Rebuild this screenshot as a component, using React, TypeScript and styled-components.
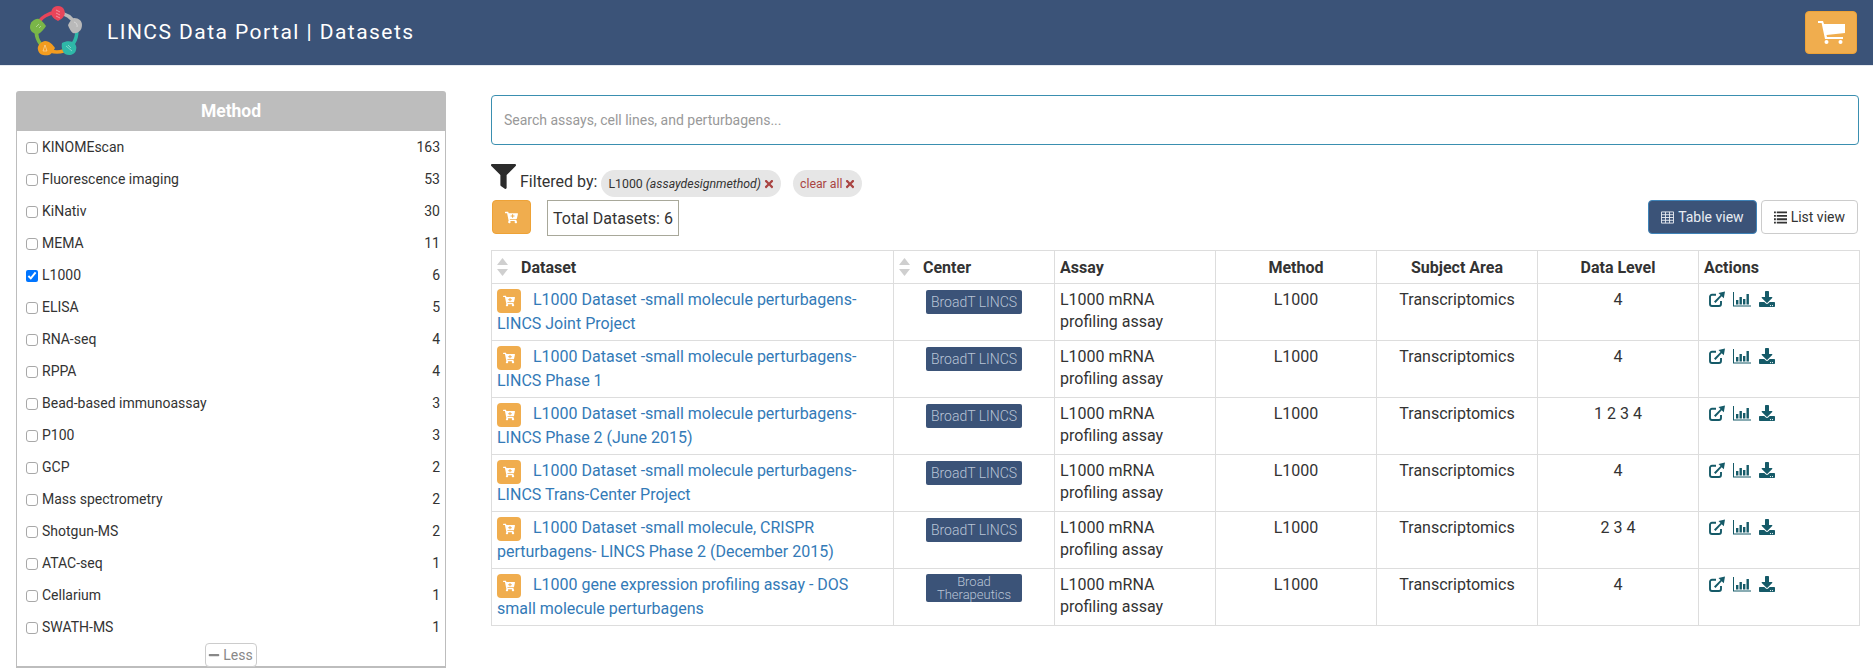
import { createGlobalStyle } from "styled-components";
import styled from "styled-components";
import { FaCartPlus, FaDownload, FaFilter, FaMinus, FaTimes } from "react-icons/fa";

const GlobalStyle = createGlobalStyle`
  html, body {
    margin: 0;
    padding: 0;
    background: #fff;
  }
  body {
    font-family: Roboto, "Liberation Sans", sans-serif;
    color: #333;
    font-size: 14px;
  }
  * {
    box-sizing: border-box;
  }
`;

const TopBar = styled.header`
  display: flex;
  align-items: center;
  height: 66px;
  padding: 0 16px 1px 30px;
  background: #3b5378;
  border-bottom: 1px solid #e6e9ef;
`;

const Logo = styled.svg`
  width: 54px;
  height: 54px;
  flex: none;
`;

const Title = styled.h1`
  margin: 0 0 0 23px;
  flex: 1;
  color: #fff;
  font-size: 21px;
  font-weight: 400;
  letter-spacing: 1.45px;
`;

const CartButton = styled.button`
  display: flex;
  align-items: center;
  justify-content: center;
  width: 52px;
  height: 43px;
  padding: 0;
  border: 1px solid #eea236;
  border-radius: 4px;
  background: #f0ad4e;
  color: #fff;
`;

const CartGlyph = styled.svg`
  width: 27px;
  height: 23px;
  fill: #fff;
`;

const Page = styled.div`
  display: flex;
  align-items: flex-start;
  padding: 25px 14px 0 16px;
`;

const FacetPanel = styled.aside`
  flex: none;
  width: 430px;
  height: 577px;
  margin-right: 45px;
  border: 1px solid #bdbdbd;
  border-bottom-width: 2px;
  border-radius: 3px 3px 0 0;
`;

const FacetTitle = styled.div`
  height: 39px;
  line-height: 39px;
  background: #bdbdbd;
  color: #fff;
  font-size: 17.5px;
  font-weight: 700;
  text-align: center;
`;

const FacetList = styled.ul`
  margin: 0;
  padding: 0;
  list-style: none;
`;

const FacetRow = styled.li`
  display: flex;
  align-items: center;
  height: 32px;
  padding: 0 5px 0 9px;
  font-size: 14px;
`;

const FacetCheck = styled.input`
  width: 12px;
  height: 12px;
  margin: 1px 4px 0 0;
  &:not(:checked) {
    appearance: none;
    border: 1px solid #a8a8a8;
    border-radius: 3px;
    background: #fff;
  }
`;

const FacetName = styled.span`
  flex: 1;
`;

const LessRow = styled.div`
  display: flex;
  justify-content: center;
`;

const LessButton = styled.button`
  display: flex;
  align-items: center;
  gap: 3px;
  height: 24px;
  padding: 0 3px 0 2px;
  border: 1px solid #ccc;
  border-radius: 4px;
  background: #fff;
  color: #888;
  font: 400 14px Roboto, sans-serif;
`;

const Main = styled.main`
  flex: 1;
  min-width: 0;
  padding-top: 4px;
`;

const SearchBox = styled.input`
  display: block;
  width: 100%;
  height: 50px;
  padding: 0 12px;
  border: 1px solid #3a8fb0;
  border-radius: 4px;
  font: 400 14px Roboto, sans-serif;
  outline: none;
  &::placeholder {
    color: #999;
    opacity: 1;
  }
`;

const FilterRow = styled.div`
  display: flex;
  align-items: flex-end;
  height: 55px;
  padding-top: 19px;
`;

const FunnelIcon = styled(FaFilter)`
  width: 25px;
  height: 25px;
  margin-right: 4px;
  margin-bottom: 11px;
  color: #2b2b2b;
`;

const FilterLabel = styled.span`
  margin-right: 4px;
  margin-bottom: 9px;
  font-size: 16px;
`;

const Chip = styled.span<{ $danger?: boolean }>`
  display: inline-flex;
  align-items: center;
  gap: 2px;
  height: 27px;
  margin-right: 12px;
  margin-bottom: 3px;
  padding: 0 6px 0 7px;
  border-radius: 14px;
  background: #e6e6e6;
  color: ${(p) => (p.$danger ? "#a94442" : "#333")};
  font-size: 12.3px;
  svg {
    color: #a94442;
    font-size: 12px;
  }
`;

const ToolRow = styled.div`
  display: flex;
  align-items: flex-start;
  height: 50px;
`;

const AddAllButton = styled.button`
  display: flex;
  align-items: center;
  justify-content: center;
  width: 39px;
  height: 34px;
  margin-left: 1px;
  padding: 0;
  border: 1px solid #eea236;
  border-radius: 4px;
  background: #f0ad4e;
  color: #fff;
  font-size: 13px;
`;

const TotalBox = styled.div`
  height: 36px;
  margin-left: 16px;
  padding: 0 5px;
  border: 1px solid #a8a89a;
  font-size: 16px;
  line-height: 36px;
`;

const ViewSwitch = styled.div`
  display: flex;
  gap: 4px;
  margin-left: auto;
  margin-right: 1px;
`;

const ViewButton = styled.button<{ $active?: boolean }>`
  display: flex;
  align-items: center;
  gap: 4px;
  height: 34px;
  padding: 0 12px;
  border: 1px solid ${(p) => (p.$active ? "#3f83b8" : "#ccc")};
  border-radius: 4px;
  background: ${(p) => (p.$active ? "#3b5378" : "#fff")};
  color: ${(p) => (p.$active ? "#e8ecf2" : "#333")};
  font: 400 14px Roboto, sans-serif;
`;

const ViewGlyph = styled.svg`
  width: 13px;
  height: 13px;
  flex: none;
`;

const DataTable = styled.table`
  width: 1368px;
  border-collapse: collapse;
  table-layout: fixed;
  font-size: 16px;
`;

const HeadCell = styled.th<{ $left?: boolean }>`
  height: 33px;
  padding: 0 5px;
  border: 1px solid #ddd;
  font-size: 16px;
  font-weight: 700;
  text-align: ${(p) => (p.$left ? "left" : "center")};
`;

const HeadInner = styled.div`
  display: flex;
  align-items: center;
  gap: 13px;
`;

const SortArrows = styled.svg`
  width: 11px;
  height: 18px;
  fill: #cfcfcf;
  flex: none;
`;

const Cell = styled.td<{ $center?: boolean }>`
  height: 57px;
  padding: 5px;
  border: 1px solid #ddd;
  line-height: 22px;
  vertical-align: top;
  text-align: ${(p) => (p.$center ? "center" : "left")};
`;

const LinkCell = styled(Cell)`
  padding: 4px 5px;
`;

const DatasetLink = styled.a`
  color: #337ab7;
  font-size: 16px;
  line-height: 24px;
  text-decoration: none;
`;

const RowCart = styled.span`
  display: inline-flex;
  align-items: center;
  justify-content: center;
  width: 24px;
  height: 24px;
  margin: 1px 12px -1px 0;
  border-radius: 4px;
  background: #f0ad4e;
  color: #fff;
  font-size: 12px;
  vertical-align: top;
`;

const CenterBadge = styled.span<{ $tall?: boolean }>`
  display: flex;
  align-items: center;
  justify-content: center;
  width: 96px;
  height: ${(p) => (p.$tall ? "28px" : "24px")};
  margin: ${(p) => (p.$tall ? "0" : "1px")} auto 0;
  border-radius: 2px;
  background: #3b5378;
  color: #b9c4d6;
  font-size: ${(p) => (p.$tall ? "13px" : "14px")};
  font-weight: 300;
  line-height: 13px;
  text-align: center;
`;

const Actions = styled.div`
  display: flex;
  align-items: center;
  gap: 8px;
  padding: 2px 0 0 5px;
  color: #155a68;
  font-size: 16px;
`;

const ActionGlyph = styled.svg<{ $wide?: boolean }>`
  width: ${(p) => (p.$wide ? "18px" : "16px")};
  height: 16px;
  flex: none;
`;

type Dataset = {
  first: string;
  second: string;
  center: string;
  level: string;
};

const datasets: Dataset[] = [
  { first: "L1000 Dataset -small molecule perturbagens-", second: "LINCS Joint Project", center: "BroadT LINCS", level: "4" },
  { first: "L1000 Dataset -small molecule perturbagens-", second: "LINCS Phase 1", center: "BroadT LINCS", level: "4" },
  { first: "L1000 Dataset -small molecule perturbagens-", second: "LINCS Phase 2 (June 2015)", center: "BroadT LINCS", level: "1 2 3 4" },
  { first: "L1000 Dataset -small molecule perturbagens-", second: "LINCS Trans-Center Project", center: "BroadT LINCS", level: "4" },
  { first: "L1000 Dataset -small molecule, CRISPR", second: "perturbagens- LINCS Phase 2 (December 2015)", center: "BroadT LINCS", level: "2 3 4" },
  { first: "L1000 gene expression profiling assay - DOS", second: "small molecule perturbagens", center: "Broad Therapeutics", level: "4" },
];

const facets: [string, number, boolean?][] = [
  ["KINOMEscan", 163],
  ["Fluorescence imaging", 53],
  ["KiNativ", 30],
  ["MEMA", 11],
  ["L1000", 6, true],
  ["ELISA", 5],
  ["RNA-seq", 4],
  ["RPPA", 4],
  ["Bead-based immunoassay", 3],
  ["P100", 3],
  ["GCP", 2],
  ["Mass spectrometry", 2],
  ["Shotgun-MS", 2],
  ["ATAC-seq", 1],
  ["Cellarium", 1],
  ["SWATH-MS", 1],
];

function LincsLogo() {
  return (
    <Logo viewBox="0 0 54 54">
      <g fill="none" strokeWidth="3.5">
        <path d="M28 8 A20 20 0 0 1 45 19" stroke="#b9b9b9" />
        <path d="M45 19 A20 20 0 0 1 39 43" stroke="#2fb8a8" />
        <path d="M39 43 A20 20 0 0 1 15 43" stroke="#f39c1f" />
        <path d="M15 43 A20 20 0 0 1 7 21" stroke="#7ab648" />
        <path d="M7 21 A20 20 0 0 1 28 8" stroke="#e8455a" />
      </g>
      <path d="M28 1 C34 1 36 7 34 11 C33 13 30 15 28 16 C26 15 23 13 22 11 C20 7 22 1 28 1 Z" fill="#e8455a" />
      <path d="M52 20 C52 26 47 29 43 28 C41 27 39 23 38 20 C39 18 41 14 44 13 C49 13 52 16 52 20 Z" fill="#b9b9b9" />
      <path d="M46 45 C45 50 39 51 35 49 C33 47 31 43 32 38 C36 36 39 36 43 37 C46 39 47 42 46 45 Z" fill="#2fb8a8" />
      <path d="M8 45 C9 50 15 51 19 50 C22 49 24 45 25 43 C23 40 20 36 15 36 C10 37 7 41 8 45 Z" fill="#f39c1f" />
      <path d="M0 22 C0 17 5 13 9 14 C11 15 14 18 16 21 C14 24 11 28 8 29 C3 29 0 26 0 22 Z" fill="#7ab648" />
      <g fill="none" stroke="#fff" strokeOpacity=".4" strokeWidth="1">
        <path d="M26 5 L30 7 M26 8 L30 10 M26 11 L30 13" />
        <path d="M44 17 A4 4 0 0 1 47 22" />
        <path d="M36 41 L42 46 M38 40 L41 43" />
        <path d="M15 40 L13 46 L17 46 Z" />
        <path d="M6 22 L9 19 M9 23 L11 21" />
      </g>
    </Logo>
  );
}

function Sort() {
  return (
    <SortArrows viewBox="0 0 11 18">
      <path d="M0 7 L5.5 0 L11 7 Z" />
      <path d="M0 11 L5.5 18 L11 11 Z" />
    </SortArrows>
  );
}

function CartIcon() {
  return (
    <CartGlyph viewBox="0 0 27 23">
      <path d="M0 0 H5 L6 3 H27 V12 L8.5 14 L9 16 H25 V18 H7 L3.6 2 H0 Z" />
      <circle cx="8.5" cy="21" r="2" />
      <circle cx="22.5" cy="21" r="2" />
    </CartGlyph>
  );
}

function TableIcon() {
  return (
    <ViewGlyph viewBox="0 0 14 13" fill="none" stroke="currentColor">
      <path d="M.5 .5 H13.5 V12.5 H.5 Z M.5 3.5 H13.5 M.5 6.5 H13.5 M.5 9.5 H13.5 M4.8 .5 V12.5 M9.2 .5 V12.5" />
    </ViewGlyph>
  );
}

function ListIcon() {
  return (
    <ViewGlyph viewBox="0 0 14 13" fill="currentColor">
      <path d="M0 0 H2 V2 H0 Z M3 0 H14 V2 H3 Z M0 3.7 H2 V5.7 H0 Z M3 3.7 H14 V5.7 H3 Z M0 7.4 H2 V9.4 H0 Z M3 7.4 H14 V9.4 H3 Z M0 11 H2 V13 H0 Z M3 11 H14 V13 H3 Z" />
    </ViewGlyph>
  );
}

function ShareIcon() {
  return (
    <ActionGlyph viewBox="0 0 16 16">
      <path d="M7 3.8 H3 A2 2 0 0 0 1 5.8 V13 A2 2 0 0 0 3 15 H10 A2 2 0 0 0 12 13 V10" fill="none" stroke="currentColor" strokeWidth="1.9" />
      <path d="M5 10.5 L11.5 4 L9.5 2 L16 .5 L14.8 7.2 L12.7 5.2 L6.5 12 Z" fill="currentColor" />
    </ActionGlyph>
  );
}

function ChartIcon() {
  return (
    <ActionGlyph $wide viewBox="0 0 18 16" fill="currentColor">
      <path d="M0 1 H1 V14.5 H18 V15.5 H0 Z" />
      <path d="M3 9 H5.4 V13.5 H3 Z M6.5 6 H8.9 V13.5 H6.5 Z M10 8 H12.4 V13.5 H10 Z M13.5 3 H15.9 V13.5 H13.5 Z" />
    </ActionGlyph>
  );
}

export default function App() {
  return (
    <>
      <GlobalStyle />
      <TopBar>
        <LincsLogo />
        <Title>LINCS Data Portal | Datasets</Title>
        <CartButton aria-label="cart">
          <CartIcon />
        </CartButton>
      </TopBar>
      <Page>
        <FacetPanel>
          <FacetTitle>Method</FacetTitle>
          <FacetList>
            {facets.map(([name, count, checked]) => (
              <FacetRow key={name}>
                <FacetCheck type="checkbox" defaultChecked={checked} />
                <FacetName>{name}</FacetName>
                <span>{count}</span>
              </FacetRow>
            ))}
          </FacetList>
          <LessRow>
            <LessButton>
              <FaMinus size={12} /> Less
            </LessButton>
          </LessRow>
        </FacetPanel>
        <Main>
          <SearchBox placeholder="Search assays, cell lines, and perturbagens..." />
          <FilterRow>
            <FunnelIcon />
            <FilterLabel>Filtered by:</FilterLabel>
            <Chip>
              <span>
                L1000 <em>(assaydesignmethod)</em>
              </span>
              <FaTimes />
            </Chip>
            <Chip $danger>
              clear all <FaTimes />
            </Chip>
          </FilterRow>
          <ToolRow>
            <AddAllButton aria-label="add all">
              <FaCartPlus />
            </AddAllButton>
            <TotalBox>Total Datasets: 6</TotalBox>
            <ViewSwitch>
              <ViewButton $active>
                <TableIcon /> Table view
              </ViewButton>
              <ViewButton>
                <ListIcon /> List view
              </ViewButton>
            </ViewSwitch>
          </ToolRow>
          <DataTable>
            <colgroup>
              <col style={{ width: 402 }} />
              <col style={{ width: 161 }} />
              <col style={{ width: 161 }} />
              <col style={{ width: 161 }} />
              <col style={{ width: 161 }} />
              <col style={{ width: 161 }} />
              <col style={{ width: 161 }} />
            </colgroup>
            <thead>
              <tr>
                <HeadCell $left>
                  <HeadInner>
                    <Sort />
                    Dataset
                  </HeadInner>
                </HeadCell>
                <HeadCell $left>
                  <HeadInner>
                    <Sort />
                    Center
                  </HeadInner>
                </HeadCell>
                <HeadCell $left>Assay</HeadCell>
                <HeadCell>Method</HeadCell>
                <HeadCell>Subject Area</HeadCell>
                <HeadCell>Data Level</HeadCell>
                <HeadCell $left>Actions</HeadCell>
              </tr>
            </thead>
            <tbody>
              {datasets.map((d) => (
                <tr key={d.second}>
                  <LinkCell>
                    <RowCart>
                      <FaCartPlus />
                    </RowCart>
                    <DatasetLink href="#">
                      {d.first} {d.second}
                    </DatasetLink>
                  </LinkCell>
                  <Cell>
                    <CenterBadge $tall={d.center.includes(" Thera")}>{d.center}</CenterBadge>
                  </Cell>
                  <Cell>L1000 mRNA profiling assay</Cell>
                  <Cell $center>L1000</Cell>
                  <Cell $center>Transcriptomics</Cell>
                  <Cell $center>{d.level}</Cell>
                  <Cell>
                    <Actions>
                      <ShareIcon />
                      <ChartIcon />
                      <FaDownload />
                    </Actions>
                  </Cell>
                </tr>
              ))}
            </tbody>
          </DataTable>
        </Main>
      </Page>
    </>
  );
}
